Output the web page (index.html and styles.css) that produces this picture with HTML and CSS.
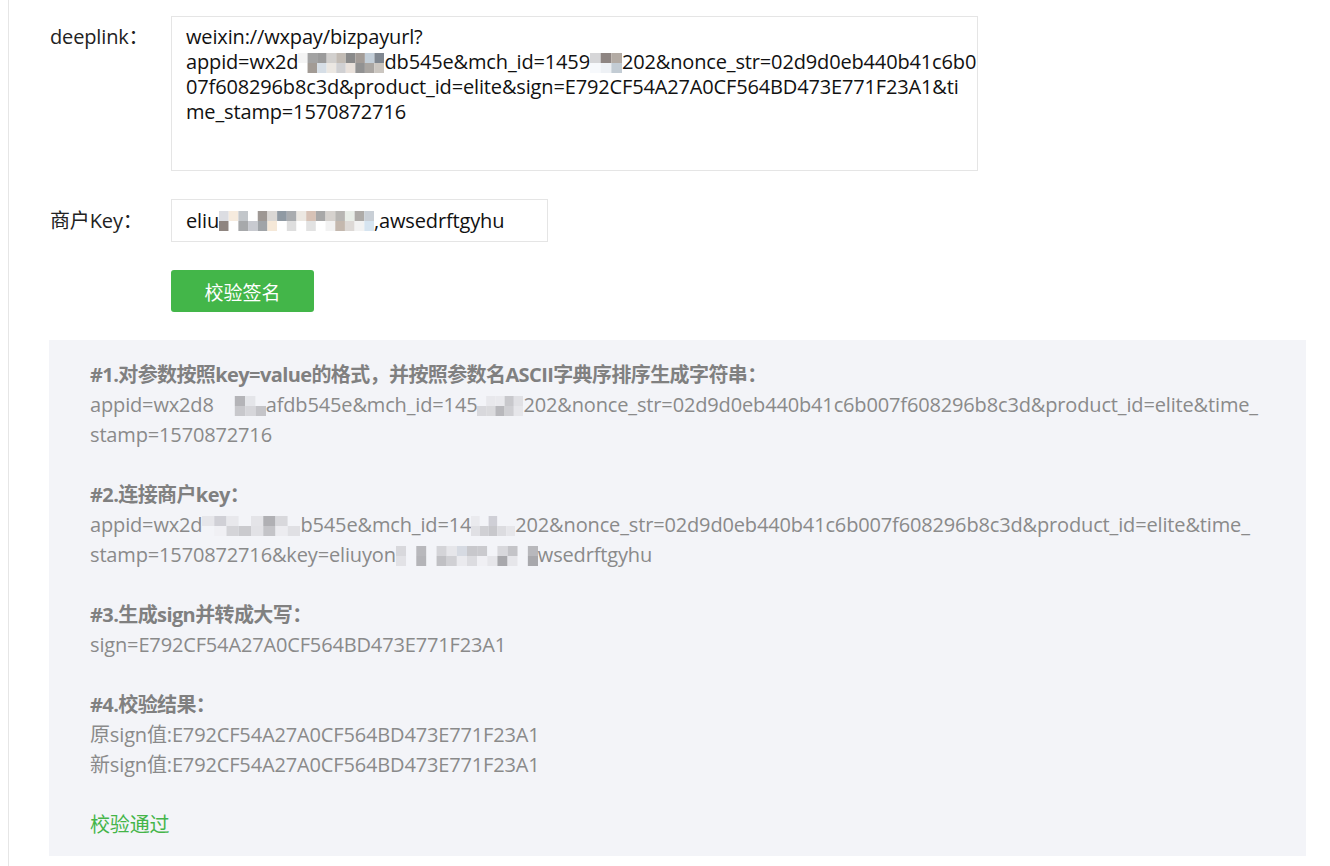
FILE: index.html
```html
<!DOCTYPE html>
<html lang="zh-CN">
<head>
<meta charset="utf-8">
<title>签名校验</title>
<link rel="stylesheet" href="styles.css">
</head>
<body>
<div class="page">
  <div class="form">
    <div class="row row-top">
      <label class="label label-top">deeplink：</label>
      <div class="textarea">
        <div class="tline">weixin://wxpay/bizpayurl?</div>
        <div class="tline">appid=wx2d<svg class="mosaic m-a" viewBox="0 0 90 20" preserveAspectRatio="none"><rect x="0" y="0" width="10" height="10" fill="#f4f4f4"/><rect x="10" y="0" width="10" height="10" fill="#a3a3a3"/><rect x="20" y="0" width="10" height="10" fill="#9b9b9b"/><rect x="30" y="0" width="10" height="10" fill="#d2d0ce"/><rect x="40" y="0" width="10" height="10" fill="#c2bbb4"/><rect x="50" y="0" width="10" height="10" fill="#8a8a8a"/><rect x="60" y="0" width="10" height="10" fill="#a39c97"/><rect x="70" y="0" width="10" height="10" fill="#c3ced8"/><rect x="80" y="0" width="10" height="10" fill="#808790"/><rect x="0" y="10" width="10" height="10" fill="#ffffff"/><rect x="10" y="10" width="10" height="10" fill="#a29b95"/><rect x="20" y="10" width="10" height="10" fill="#d6dee6"/><rect x="30" y="10" width="10" height="10" fill="#ebe7e2"/><rect x="40" y="10" width="10" height="10" fill="#d0d0d2"/><rect x="50" y="10" width="10" height="10" fill="#e9e1db"/><rect x="60" y="10" width="10" height="10" fill="#929292"/><rect x="70" y="10" width="10" height="10" fill="#aaa6a2"/><rect x="80" y="10" width="10" height="10" fill="#cbc6c0"/></svg>db545e&amp;mch_id=1459<svg class="mosaic m-b" viewBox="0 0 30 20" preserveAspectRatio="none"><rect x="0" y="0" width="10" height="10" fill="#d6d6d8"/><rect x="10" y="0" width="10" height="10" fill="#8e8582"/><rect x="20" y="0" width="10" height="10" fill="#b3aba4"/><rect x="0" y="10" width="10" height="10" fill="#f7f9fc"/><rect x="10" y="10" width="10" height="10" fill="#eef1f5"/><rect x="20" y="10" width="10" height="10" fill="#c3ccd4"/></svg>202&amp;nonce_str=02d9d0eb440b41c6b0</div>
        <div class="tline">07f608296b8c3d&amp;product_id=elite&amp;sign=E792CF54A27A0CF564BD473E771F23A1&amp;ti</div>
        <div class="tline">me_stamp=1570872716</div>
      </div>
    </div>
    <div class="row row-mid">
      <label class="label">商户Key：</label>
      <div class="input">eliu<svg class="mosaic m-c" viewBox="0 0 160 20" preserveAspectRatio="none"><rect x="0" y="0" width="10" height="10" fill="#dcdde2"/><rect x="10" y="0" width="10" height="10" fill="#f6ebde"/><rect x="20" y="0" width="10" height="10" fill="#c2c6ca"/><rect x="30" y="0" width="10" height="10" fill="#ffffff"/><rect x="40" y="0" width="10" height="10" fill="#9e9894"/><rect x="50" y="0" width="10" height="10" fill="#dbd8d5"/><rect x="60" y="0" width="10" height="10" fill="#909aa3"/><rect x="70" y="0" width="10" height="10" fill="#a9acaf"/><rect x="80" y="0" width="10" height="10" fill="#ece8e2"/><rect x="90" y="0" width="10" height="10" fill="#d7c2b6"/><rect x="100" y="0" width="10" height="10" fill="#a8a8a8"/><rect x="110" y="0" width="10" height="10" fill="#d6d2ce"/><rect x="120" y="0" width="10" height="10" fill="#b8b6b3"/><rect x="130" y="0" width="10" height="10" fill="#e9eee8"/><rect x="140" y="0" width="10" height="10" fill="#aeaba8"/><rect x="150" y="0" width="10" height="10" fill="#c9cfd6"/><rect x="0" y="10" width="10" height="10" fill="#8f8580"/><rect x="10" y="10" width="10" height="10" fill="#ffffff"/><rect x="20" y="10" width="10" height="10" fill="#a7a9ab"/><rect x="30" y="10" width="10" height="10" fill="#c8cad0"/><rect x="40" y="10" width="10" height="10" fill="#a0a4a8"/><rect x="50" y="10" width="10" height="10" fill="#f5e8d8"/><rect x="60" y="10" width="10" height="10" fill="#ffffff"/><rect x="70" y="10" width="10" height="10" fill="#dedede"/><rect x="80" y="10" width="10" height="10" fill="#ffffff"/><rect x="90" y="10" width="10" height="10" fill="#e2e2e2"/><rect x="100" y="10" width="10" height="10" fill="#ffffff"/><rect x="110" y="10" width="10" height="10" fill="#f2f2f2"/><rect x="120" y="10" width="10" height="10" fill="#c4b8ae"/><rect x="130" y="10" width="10" height="10" fill="#ddd9d6"/><rect x="140" y="10" width="10" height="10" fill="#f2f2f2"/><rect x="150" y="10" width="10" height="10" fill="#d6e4f0"/></svg>,awsedrftgyhu</div>
    </div>
    <div class="row row-btn">
      <div class="label"></div>
      <button class="btn" type="button">校验签名</button>
    </div>
  </div>

  <div class="panel">
    <div class="section">
      <div class="heading">#1.对参数按照key=value的格式，并按照参数名ASCII字典序排序生成字符串：</div>
      <div class="pline">appid=wx2d8<svg class="mosaic m-d" viewBox="0 0 50 20" preserveAspectRatio="none"><rect x="0" y="0" width="10" height="10" fill="#f3f4f8"/><rect x="10" y="0" width="10" height="10" fill="#f3f4f8"/><rect x="20" y="0" width="10" height="10" fill="#b4b4b8"/><rect x="30" y="0" width="10" height="10" fill="#e4e5e9"/><rect x="40" y="0" width="10" height="10" fill="#f3f4f8"/><rect x="0" y="10" width="10" height="10" fill="#f3f4f8"/><rect x="10" y="10" width="10" height="10" fill="#f3f4f8"/><rect x="20" y="10" width="10" height="10" fill="#c8c8cc"/><rect x="30" y="10" width="10" height="10" fill="#d6d6da"/><rect x="40" y="10" width="10" height="10" fill="#c4c4c8"/></svg>afdb545e&amp;mch_id=145<svg class="mosaic m-e" viewBox="0 0 50 20" preserveAspectRatio="none"><rect x="0" y="0" width="10" height="10" fill="#f3f4f8"/><rect x="10" y="0" width="10" height="10" fill="#e8e8ec"/><rect x="20" y="0" width="10" height="10" fill="#e9e9ed"/><rect x="30" y="0" width="10" height="10" fill="#c8c8cc"/><rect x="40" y="0" width="10" height="10" fill="#e0e0e4"/><rect x="0" y="10" width="10" height="10" fill="#d8d8dc"/><rect x="10" y="10" width="10" height="10" fill="#dadadd"/><rect x="20" y="10" width="10" height="10" fill="#b8b8bc"/><rect x="30" y="10" width="10" height="10" fill="#cfcfd3"/><rect x="40" y="10" width="10" height="10" fill="#e6e6ea"/></svg>202&amp;nonce_str=02d9d0eb440b41c6b007f608296b8c3d&amp;product_id=elite&amp;time_</div>
      <div class="pline">stamp=1570872716</div>
    </div>
    <div class="section">
      <div class="heading">#2.连接商户key：</div>
      <div class="pline">appid=wx2d<svg class="mosaic m-f" viewBox="0 0 80 20" preserveAspectRatio="none"><rect x="0" y="0" width="10" height="10" fill="#e6e6ea"/><rect x="10" y="0" width="10" height="10" fill="#d0d0d6"/><rect x="20" y="0" width="10" height="10" fill="#e8e8ec"/><rect x="30" y="0" width="10" height="10" fill="#f3f4f8"/><rect x="40" y="0" width="10" height="10" fill="#e4e4e8"/><rect x="50" y="0" width="10" height="10" fill="#b0b0b4"/><rect x="60" y="0" width="10" height="10" fill="#d8d8dc"/><rect x="70" y="0" width="10" height="10" fill="#f3f4f8"/><rect x="0" y="10" width="10" height="10" fill="#f3f4f8"/><rect x="10" y="10" width="10" height="10" fill="#f0f0f4"/><rect x="20" y="10" width="10" height="10" fill="#d4d4d8"/><rect x="30" y="10" width="10" height="10" fill="#cacace"/><rect x="40" y="10" width="10" height="10" fill="#e2e2e6"/><rect x="50" y="10" width="10" height="10" fill="#c4c4c8"/><rect x="60" y="10" width="10" height="10" fill="#ececf0"/><rect x="70" y="10" width="10" height="10" fill="#e0e0e4"/></svg>b545e&amp;mch_id=14<svg class="mosaic m-g" viewBox="0 0 50 20" preserveAspectRatio="none"><rect x="0" y="0" width="10" height="10" fill="#eaeaee"/><rect x="10" y="0" width="10" height="10" fill="#f3f4f8"/><rect x="20" y="0" width="10" height="10" fill="#cfcfd6"/><rect x="30" y="0" width="10" height="10" fill="#f3f4f8"/><rect x="40" y="0" width="10" height="10" fill="#f3f4f8"/><rect x="0" y="10" width="10" height="10" fill="#e0e0e4"/><rect x="10" y="10" width="10" height="10" fill="#d0d0d4"/><rect x="20" y="10" width="10" height="10" fill="#c8c8cc"/><rect x="30" y="10" width="10" height="10" fill="#dcdce0"/><rect x="40" y="10" width="10" height="10" fill="#e6e6ea"/></svg>202&amp;nonce_str=02d9d0eb440b41c6b007f608296b8c3d&amp;product_id=elite&amp;time_</div>
      <div class="pline">stamp=1570872716&amp;key=eliuyon<svg class="mosaic m-h" viewBox="0 0 140 20" preserveAspectRatio="none"><rect x="0" y="0" width="10" height="10" fill="#d8d8dc"/><rect x="10" y="0" width="10" height="10" fill="#f3f4f8"/><rect x="20" y="0" width="10" height="10" fill="#b8b8bc"/><rect x="30" y="0" width="10" height="10" fill="#f3f4f8"/><rect x="40" y="0" width="10" height="10" fill="#d4d4d8"/><rect x="50" y="0" width="10" height="10" fill="#e6e6ea"/><rect x="60" y="0" width="10" height="10" fill="#d6dae2"/><rect x="70" y="0" width="10" height="10" fill="#c8c8cc"/><rect x="80" y="0" width="10" height="10" fill="#cacace"/><rect x="90" y="0" width="10" height="10" fill="#f3f4f8"/><rect x="100" y="0" width="10" height="10" fill="#d8d8dc"/><rect x="110" y="0" width="10" height="10" fill="#c4c4c8"/><rect x="120" y="0" width="10" height="10" fill="#f3f4f8"/><rect x="130" y="0" width="10" height="10" fill="#b8b8bc"/><rect x="0" y="10" width="10" height="10" fill="#e2e2e6"/><rect x="10" y="10" width="10" height="10" fill="#f3f4f8"/><rect x="20" y="10" width="10" height="10" fill="#b4b4b8"/><rect x="30" y="10" width="10" height="10" fill="#f3f4f8"/><rect x="40" y="10" width="10" height="10" fill="#c0c0c4"/><rect x="50" y="10" width="10" height="10" fill="#d0d0d4"/><rect x="60" y="10" width="10" height="10" fill="#eaeaee"/><rect x="70" y="10" width="10" height="10" fill="#dcdce0"/><rect x="80" y="10" width="10" height="10" fill="#f0f0f4"/><rect x="90" y="10" width="10" height="10" fill="#e6e6ea"/><rect x="100" y="10" width="10" height="10" fill="#a8a8ac"/><rect x="110" y="10" width="10" height="10" fill="#e6e6ea"/><rect x="120" y="10" width="10" height="10" fill="#f3f4f8"/><rect x="130" y="10" width="10" height="10" fill="#a8a8ac"/></svg>wsedrftgyhu</div>
    </div>
    <div class="section">
      <div class="heading">#3.生成sign并转成大写：</div>
      <div class="pline">sign=E792CF54A27A0CF564BD473E771F23A1</div>
    </div>
    <div class="section">
      <div class="heading">#4.校验结果：</div>
      <div class="pline">原sign值:E792CF54A27A0CF564BD473E771F23A1</div>
      <div class="pline">新sign值:E792CF54A27A0CF564BD473E771F23A1</div>
    </div>
    <div class="section last">
      <div class="pline ok">校验通过</div>
    </div>
  </div>
</div>
</body>
</html>
```

FILE: styles.css
```css
* { box-sizing: border-box; }

html, body {
  margin: 0;
  padding: 0;
  background: #ffffff;
}

body {
  font-family: "Open Sans", "Noto Sans CJK SC", sans-serif;
  font-size: 20px;
  letter-spacing: -0.15px;
  color: #222222;
}

.page {
  margin-left: 8px;
  border-left: 1px solid #e6e6e6;
  min-height: 866px;
  padding: 16px 0 0 40px;
}

.form {
  display: flex;
  flex-direction: column;
  gap: 28px;
}

.row {
  display: flex;
  align-items: center;
}

.row-top {
  align-items: flex-start;
}

.label {
  width: 122px;
  flex: none;
  padding-left: 1px;
  line-height: 25px;
  color: #222222;
  white-space: nowrap;
}

.label-top {
  padding-top: 8px;
}

.textarea {
  width: 807px;
  height: 155px;
  border: 1px solid #e5e5e5;
  padding: 7px 14px;
  line-height: 25px;
  color: #111111;
}

.tline {
  white-space: nowrap;
}

.input {
  width: 377px;
  height: 43px;
  border: 1px solid #e5e5e5;
  padding: 0 14px;
  display: flex;
  align-items: center;
  white-space: nowrap;
  color: #111111;
}

.btn {
  width: 143px;
  height: 42px;
  border: none;
  border-radius: 3px;
  background: #43b649;
  color: #ffffff;
  font-family: "Noto Sans CJK SC", sans-serif;
  font-size: 19px;
  padding: 0;
  cursor: pointer;
}

.mosaic {
  display: inline-block;
  vertical-align: -4px;
  height: 20px;
}

.m-a { width: 86px; }
.m-b { width: 32px; }
.m-c { width: 155px; }
.m-d { width: 52px; }
.m-e { width: 46px; }
.m-f { width: 98px; }
.m-g { width: 44px; }
.m-h { width: 142px; }

.panel {
  margin-top: 28px;
  width: 1257px;
  background: #f3f4f8;
  padding: 20px 41px 16px;
  line-height: 30px;
  color: #8a8a8a;
}

.section {
  margin-bottom: 30px;
}

.section.last {
  margin-bottom: 0;
}

.heading {
  font-weight: 700;
  letter-spacing: -0.6px;
  color: #808080;
  white-space: nowrap;
}

.pline {
  white-space: nowrap;
}

.ok {
  color: #44b549;
}
```
